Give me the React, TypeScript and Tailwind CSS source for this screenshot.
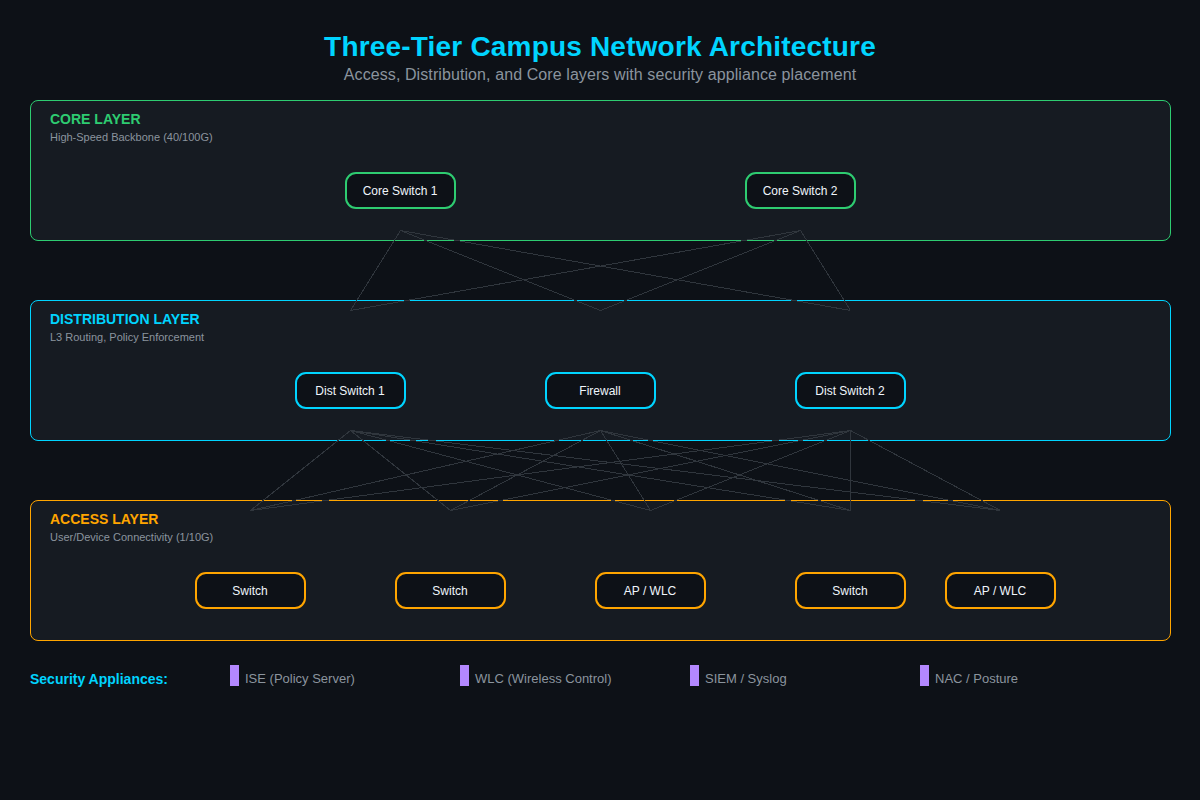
const coreLinks = [400, 800].flatMap((x1) => [350, 600, 850].map((x2) => ({ x1, y1: 230, x2, y2: 310 })));
const distLinks = [350, 600, 850].flatMap((x1) => [250, 450, 650, 850, 1000].map((x2) => ({ x1, y1: 430, x2, y2: 510 })));

const legend = ["ISE (Policy Server)", "WLC (Wireless Control)", "SIEM / Syslog", "NAC / Posture"];

function Node({ label, border, className = "" }: { label: string; border: string; className?: string }) {
  return (
    <div
      className={`flex h-[37px] w-[111px] shrink-0 items-center justify-center rounded-[11px] border-2 bg-[#0d1117] pr-px text-xs text-[#f0f6fc] ${border} ${className}`}
    >
      {label}
    </div>
  );
}

function Layer({
  title,
  subtitle,
  border,
  titleColor,
  children,
}: {
  title: string;
  subtitle: string;
  border: string;
  titleColor: string;
  children: React.ReactNode;
}) {
  return (
    <section className={`h-[141px] w-[1141px] rounded-[8px] border bg-[#161b22] pl-[19px] pt-[10px] ${border}`}>
      <h2 className={`text-sm font-bold leading-4 ${titleColor}`}>{title}</h2>
      <p className="mt-[3px] text-[11px] leading-[14px] text-[#8b949e]">{subtitle}</p>
      {children}
    </section>
  );
}

export default function App() {
  return (
    <div
      className="relative h-[800px] w-[1200px] overflow-hidden bg-[#0d1117] px-[30px]"
      style={{ fontFamily: '"Liberation Sans", Arial, sans-serif' }}
    >
      <header className="h-[100px] pt-[31px] text-center">
        <h1 className="text-[28px] font-bold leading-8 tracking-[0.19px] text-[#00d4ff]">
          Three-Tier Campus Network Architecture
        </h1>
        <p className="mt-[3px] text-base leading-[18px] tracking-[0.09px] text-[#8b949e]">
          Access, Distribution, and Core layers with security appliance placement
        </p>
      </header>

      <div className="flex flex-col gap-[59px]">
        <Layer title="CORE LAYER" subtitle="High-Speed Backbone (40/100G)" border="border-[#2ecc71]" titleColor="text-[#2ecc71]">
          <div className="ml-[295px] mt-[28px] flex gap-[289px]">
            <Node label="Core Switch 1" border="border-[#2ecc71]" />
            <Node label="Core Switch 2" border="border-[#2ecc71]" />
          </div>
        </Layer>

        <Layer title="DISTRIBUTION LAYER" subtitle="L3 Routing, Policy Enforcement" border="border-[#00d4ff]" titleColor="text-[#00d4ff]">
          <div className="ml-[245px] mt-[28px] flex gap-[139px]">
            <Node label="Dist Switch 1" border="border-[#00d4ff]" />
            <Node label="Firewall" border="border-[#00d4ff]" />
            <Node label="Dist Switch 2" border="border-[#00d4ff]" />
          </div>
        </Layer>

        <Layer title="ACCESS LAYER" subtitle="User/Device Connectivity (1/10G)" border="border-[#ffa500]" titleColor="text-[#ffa500]">
          <div className="ml-[145px] mt-[28px] flex gap-[89px]">
            <Node label="Switch" border="border-[#ffa500]" />
            <Node label="Switch" border="border-[#ffa500]" />
            <Node label="AP / WLC" border="border-[#ffa500]" />
            <Node label="Switch" border="border-[#ffa500]" />
            <Node label="AP / WLC" border="border-[#ffa500]" className="-ml-[50px]" />
          </div>
        </Layer>
      </div>

      <div className="mt-[24px] flex items-start">
        <span className="w-[200px] pt-[4px] text-sm font-bold leading-5 text-[#00d4ff]">Security Appliances:</span>
        {legend.map((item) => (
          <div key={item} className="flex w-[230px] items-start gap-[6px]">
            <span className="h-[21px] w-[9px] bg-[#b388ff]" />
            <span className="pt-[4px] text-[13px] leading-5 text-[#8b949e]">{item}</span>
          </div>
        ))}
      </div>

      {/* links run over the panels and their borders; half-pixel shift keeps them on pixel centres */}
      <svg className="pointer-events-none absolute left-0 top-0" width="1200" height="800" shapeRendering="crispEdges">
        <g transform="translate(0.5 0.5)">
          {[...coreLinks, ...distLinks].map((l) => (
            <line key={`${l.x1}-${l.y1}-${l.x2}`} {...l} stroke="#30363d" strokeWidth="1" />
          ))}
        </g>
      </svg>
    </div>
  );
}
